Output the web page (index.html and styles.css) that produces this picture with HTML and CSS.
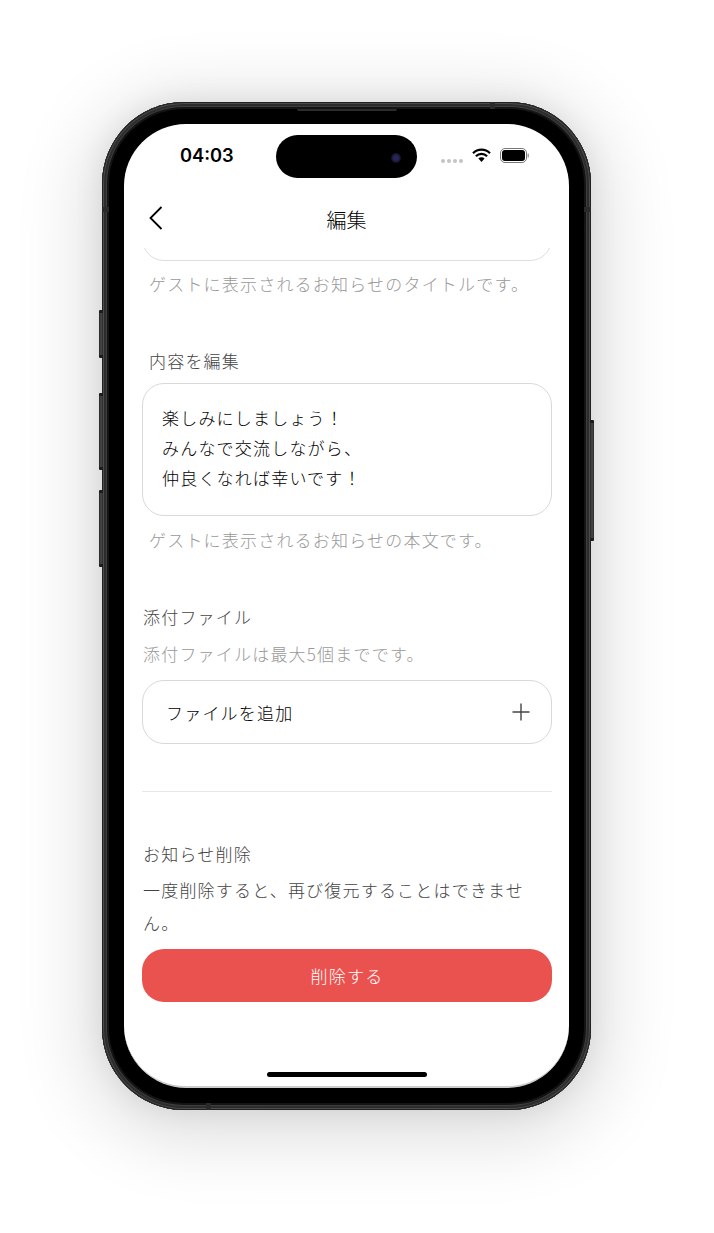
FILE: index.html
```html
<!DOCTYPE html>
<html lang="ja">
<head>
<meta charset="utf-8">
<title>編集</title>
<link rel="stylesheet" href="styles.css">
</head>
<body>
<div class="stage">
  <div class="phone">
    <span class="side side-mute"></span>
    <span class="side side-up"></span>
    <span class="side side-down"></span>
    <span class="side side-power"></span>
    <span class="band band-top"></span>
    <span class="band band-bottom"></span>
    <span class="band band-left"></span>
    <span class="band band-right"></span>
    <div class="bezel">
      <span class="speaker"></span>
      <div class="screen">
        <div class="island"><span class="camera"></span></div>
        <div class="status">
          <span class="time">04:03</span>
          <div class="status-icons">
            <span class="dots"><i></i><i></i><i></i><i></i></span>
            <svg class="wifi" width="19" height="15" viewBox="0 0 19 15" aria-hidden="true">
              <path d="M1 5.2a12 12 0 0 1 17 0M3.9 8.2a8 8 0 0 1 11.2 0" fill="none" stroke="#000" stroke-width="2.2"/>
              <path d="M6.4 10.6a4.4 4.4 0 0 1 6.2 0L9.5 14z" fill="#000"/>
            </svg>
            <svg class="battery" width="29" height="15" viewBox="0 0 29 15" aria-hidden="true">
              <rect x="0.5" y="0.5" width="26" height="14" rx="4.5" fill="#fff" stroke="#777"/>
              <rect x="2" y="2" width="23" height="11" rx="3" fill="#000"/>
              <rect x="27.6" y="5.5" width="1.2" height="4" rx="0.6" fill="#888"/>
            </svg>
          </div>
        </div>
        <header class="nav">
          <svg class="back" width="16" height="26" viewBox="0 0 16 26" aria-hidden="true">
            <path d="M13.5 2 2.5 13l11 11" fill="none" stroke="#000" stroke-width="1.8"/>
          </svg>
          <h1 class="nav-title">編集</h1>
        </header>
        <main class="content">
          <div class="clipped-card"><div class="card-ghost"></div></div>
          <p class="hint hint-inset first-hint">ゲストに表示されるお知らせのタイトルです。</p>

          <p class="label label-inset body-label">内容を編集</p>
          <div class="textarea">
            <p>楽しみにしましょう！</p>
            <p>みんなで交流しながら、</p>
            <p>仲良くなれば幸いです！</p>
          </div>
          <p class="hint hint-inset body-hint">ゲストに表示されるお知らせの本文です。</p>

          <p class="label attach-label">添付ファイル</p>
          <p class="hint attach-hint">添付ファイルは最大5個までです。</p>
          <div class="file-row">
            <span>ファイルを追加</span>
            <svg width="18" height="18" viewBox="0 0 18 18" aria-hidden="true">
              <path d="M9 .5v17M.5 9h17" fill="none" stroke="#444" stroke-width="1.4"/>
            </svg>
          </div>

          <hr class="divider">

          <p class="label delete-label">お知らせ削除</p>
          <p class="delete-text">一度削除すると、再び復元することはできません。</p>
          <button class="delete-btn" type="button">削除する</button>
        </main>
        <div class="home-bar"></div>
      </div>
    </div>
  </div>
</div>
</body>
</html>
```
FILE: styles.css
```css
* { box-sizing: border-box; }
html, body { margin: 0; padding: 0; background: #fff; }
body {
  width: 714px;
  height: 1233px;
  overflow: hidden;
  font-family: "Noto Sans CJK JP", "Noto Sans", sans-serif;
  font-weight: 300;
}
p, h1 { margin: 0; font-weight: 300; }

.stage { padding: 102px 0 0 102px; }

.phone {
  position: relative;
  width: 489px;
  height: 1008px;
  border-radius: 82px;
  background: #222;
  box-shadow:
    inset 0 0 0 1px #222,
    inset 0 0 0 2px #4c4c4c,
    inset 0 0 0 4px #2c2c2c,
    inset 0 0 0 5px #3e3e3e,
    inset 0 0 0 7px #141414,
    0 0 30px 0 rgba(0, 0, 0, .08),
    0 12px 75px 14px rgba(0, 0, 0, .14);
  padding: 7px;
}
.side {
  position: absolute;
  width: 4px;
  background: linear-gradient(90deg, #222, #4a4a4a 50%, #2a2a2a);
  border-block: 3px solid #1c1c1c;
  border-radius: 1px;
}
.side-mute { left: -3px; top: 208px; height: 48px; }
.side-up { left: -3px; top: 291px; height: 77px; }
.side-down { left: -3px; top: 388px; height: 77px; }
.side-power { right: -3px; top: 318px; height: 121px; }

.band {
  position: absolute;
  background: #2a2a2a;
}
.band-top { left: 388px; top: 0; width: 5px; height: 7px; }
.band-bottom { left: 104px; bottom: 0; width: 5px; height: 7px; }
.band-left { left: 0; top: 105px; width: 7px; height: 5px; }
.band-right { right: 0; top: 105px; width: 7px; height: 5px; }

.bezel {
  position: relative;
  width: 100%;
  height: 100%;
  background: #000;
  border-radius: 75px;
  padding: 15px;
}
.speaker {
  position: absolute;
  left: 188px;
  top: 0;
  width: 100px;
  height: 2px;
  border-radius: 0 0 2px 2px;
  background: #2c2c2c;
}
.screen {
  position: relative;
  width: 445px;
  height: 964px;
  background: #fff;
  border-radius: 62px;
  border-bottom: 2px solid #ccc;
  overflow: hidden;
}

.island {
  position: absolute;
  left: 152px;
  top: 11px;
  width: 141px;
  height: 43px;
  background: #000;
  border-radius: 22px;
}
.camera {
  position: absolute;
  left: 115px;
  top: 18px;
  width: 10px;
  height: 10px;
  border-radius: 50%;
  background: radial-gradient(circle, #26265c 0 30%, #101020 70%);
}

.status {
  height: 62px;
  padding: 20px 40px 0 56px;
  display: flex;
  justify-content: space-between;
}
.time {
  font-family: Inter, "Liberation Sans", sans-serif;
  font-size: 18.3px;
  font-weight: 600;
  line-height: 23px;
  color: #000;
}
.status-icons {
  display: flex;
  align-items: center;
  height: 23px;
}
.dots { display: flex; gap: 2px; margin-top: 10px; margin-right: 8px; }
.dots i { width: 4px; height: 4px; border-radius: 50%; background: #c4c4c4; }
.wifi { margin-right: 9px; margin-left: 1px; margin-top: -1px; }
.battery { margin-top: -1px; }

.nav {
  position: relative;
  height: 62px;
  display: flex;
  align-items: center;
  justify-content: center;
}
.back { position: absolute; left: 24px; top: 19px; }
.nav-title {
  font-size: 20px;
  line-height: 28px;
  color: #000;
  margin-top: 6px;
}

.content {
  padding: 0 17px 0 18px;
  letter-spacing: 1.2px;
}
.clipped-card {
  height: 13px;
  overflow: hidden;
}
.card-ghost {
  height: 50px;
  margin-top: -37px;
  border: 1px solid #ddd;
  border-radius: 22px;
}

.hint {
  font-size: 17px;
  line-height: 24px;
  color: #999;
}
.label {
  font-size: 17px;
  line-height: 24px;
  color: #444;
}
.hint-inset, .label-inset { padding-left: 7px; }
.first-hint { margin-top: 11px; }
.body-label { margin-top: 53px; }

.textarea {
  margin-top: 10px;
  height: 133px;
  padding: 19px 19px 0;
  border: 1px solid #d9d9d9;
  border-radius: 22px;
  font-size: 17px;
  line-height: 30px;
  color: #000;
}
.body-hint { margin-top: 12px; }

.attach-label { margin-top: 53px; padding-left: 1px; }
.attach-hint { margin-top: 13px; padding-left: 1px; }

.file-row {
  margin-top: 14px;
  height: 64px;
  padding: 0 21px 0 23px;
  border: 1px solid #d9d9d9;
  border-radius: 22px;
  display: flex;
  align-items: center;
  justify-content: space-between;
  font-size: 17px;
  color: #000;
}

.divider {
  margin: 47px 0 0;
  border: 0;
  border-top: 1px solid #e8e8e8;
}

.delete-label { margin-top: 50px; padding-left: 1px; }
.delete-text {
  margin-top: 7px;
  padding-left: 1px;
  font-size: 17px;
  line-height: 33px;
  color: #444;
}
.delete-btn {
  display: block;
  width: 100%;
  height: 53px;
  margin-top: 10px;
  border: 0;
  border-radius: 22px;
  background: #ea524f;
  color: #fff;
  font-family: inherit;
  font-weight: 300;
  font-size: 17px;
  letter-spacing: 1.2px;
}

.home-bar {
  position: absolute;
  left: 143px;
  bottom: 9px;
  width: 160px;
  height: 5px;
  border-radius: 3px;
  background: #000;
}
```
